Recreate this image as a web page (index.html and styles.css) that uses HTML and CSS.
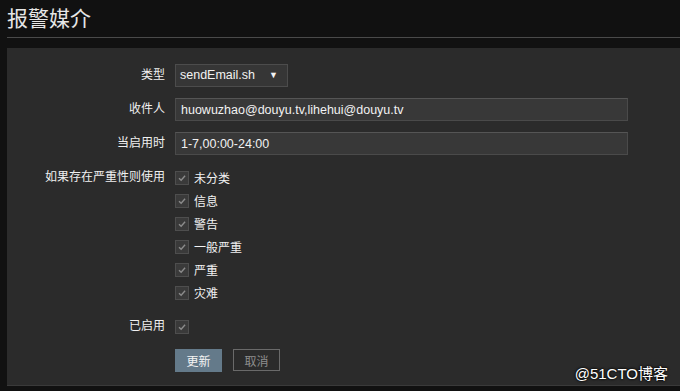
FILE: index.html
```html
<!DOCTYPE html>
<html>

<head>
	<title>报警媒介</title>
	<link rel="stylesheet" href="styles.css">
</head>

<body>
	<div class="header">
		<h1>报警媒介</h1>
	</div>
	<div class="panel">
		<div class="row">
			<label class="label">类型</label>
			<div class="select">sendEmail.sh<span class="arrow">&#9660;</span></div>
		</div>
		<div class="row">
			<label class="label">收件人</label>
			<input class="text" type="text" value="huowuzhao@douyu.tv,lihehui@douyu.tv">
		</div>
		<div class="row">
			<label class="label">当启用时</label>
			<input class="text" type="text" value="1-7,00:00-24:00">
		</div>
		<div class="row top">
			<label class="label">如果存在严重性则使用</label>
			<div class="checks">
				<div class="check"><span class="box"><svg viewBox="0 0 14 14"><path d="M3.5 7.2 L6 9.6 L10.6 4.4"/></svg></span>未分类</div>
				<div class="check"><span class="box"><svg viewBox="0 0 14 14"><path d="M3.5 7.2 L6 9.6 L10.6 4.4"/></svg></span>信息</div>
				<div class="check"><span class="box"><svg viewBox="0 0 14 14"><path d="M3.5 7.2 L6 9.6 L10.6 4.4"/></svg></span>警告</div>
				<div class="check"><span class="box"><svg viewBox="0 0 14 14"><path d="M3.5 7.2 L6 9.6 L10.6 4.4"/></svg></span>一般严重</div>
				<div class="check"><span class="box"><svg viewBox="0 0 14 14"><path d="M3.5 7.2 L6 9.6 L10.6 4.4"/></svg></span>严重</div>
				<div class="check"><span class="box"><svg viewBox="0 0 14 14"><path d="M3.5 7.2 L6 9.6 L10.6 4.4"/></svg></span>灾难</div>
			</div>
		</div>
		<div class="row">
			<label class="label">已启用</label>
			<div class="check"><span class="box"><svg viewBox="0 0 14 14"><path d="M3.5 7.2 L6 9.6 L10.6 4.4"/></svg></span></div>
		</div>
		<div class="row">
			<span></span>
			<div class="buttons">
				<button class="btn main">更新</button>
				<button class="btn cancel">取消</button>
			</div>
		</div>
	</div>
	<div class="mark">@51CTO博客</div>
</body>

</html>
```
FILE: styles.css
```css
body {
	margin: 0;
	background: #111111;
	font-family: "Liberation Sans", "Noto Sans CJK SC", sans-serif;
	font-size: 12px;
	color: #f2f2f2;
	height: 391px;
	position: relative;
	overflow: hidden;
}

.header {
	padding: 0 0 0 8px;
}

h1 {
	margin: 0;
	height: 37px;
	font-size: 21px;
	font-weight: normal;
	line-height: 38px;
	margin-left: -1px;
	color: #e6e6e6;
	border-bottom: 1px solid #4a4a4a;
}

.panel {
	margin: 10px 0 0 7px;
	background: #2b2b2b;
	padding: 16px 0 13px 0;
	height: 308px;
	border-bottom: 1px solid #3a3a3a;
}

.row {
	display: grid;
	grid-template-columns: 158px 1fr;
	column-gap: 10px;
	align-items: center;
	min-height: 23px;
	margin-bottom: 11px;
}

.row.top {
	align-items: start;
}

.label {
	text-align: right;
	line-height: 23px;
	color: #f0f0f0;
}

.select {
	width: 110px;
	height: 21px;
	box-sizing: content-box;
	border: 1px solid #4c4c4c;
	background: #363636;
	line-height: 21px;
	padding: 0 0 0 4px;
	box-sizing: border-box;
	width: 113px;
	height: 23px;
	color: #f2f2f2;
	font-size: 12.5px;
	position: relative;
}

.arrow {
	position: absolute;
	right: 9px;
	top: 0;
	font-size: 9px;
}

.text {
	width: 453px;
	height: 23px;
	box-sizing: border-box;
	border: 1px solid #4a4a4a;
	border-top-color: #555555;
	background: #383838;
	color: #f2f2f2;
	font-family: "Liberation Sans", "Noto Sans CJK SC", sans-serif;
	font-size: 12.5px;
	padding: 0 5px;
	margin: 0;
	outline: none;
}

.check {
	display: flex;
	align-items: center;
	height: 23px;
	gap: 5px;
	color: #f2f2f2;
}

.box {
	width: 14px;
	height: 14px;
	box-sizing: border-box;
	border: 1px solid #4e4e4e;
	background: #3a3a3a;
	display: block;
}

.box svg {
	display: block;
	width: 12px;
	height: 12px;
	fill: none;
	stroke: #8c8c8c;
	stroke-width: 1.6;
}

.buttons {
	display: flex;
	gap: 11px;
}

.btn {
	width: 47px;
	height: 23px;
	font-family: "Liberation Sans", "Noto Sans CJK SC", sans-serif;
	font-size: 12px;
	padding: 0;
	margin: 0;
}

.main {
	background: #647a8a;
	border: 1px solid #647a8a;
	color: #f4f4f4;
}

.cancel {
	background: transparent;
	border: 1px solid #6a6a6a;
	color: #8e8e8e;
	height: 22px;
}

.mark {
	position: absolute;
	right: 12px;
	bottom: 8px;
	font-size: 15px;
	color: #ffffff;
	text-shadow: 0 0 3px #000000, 0 0 2px #000000;
}
```
